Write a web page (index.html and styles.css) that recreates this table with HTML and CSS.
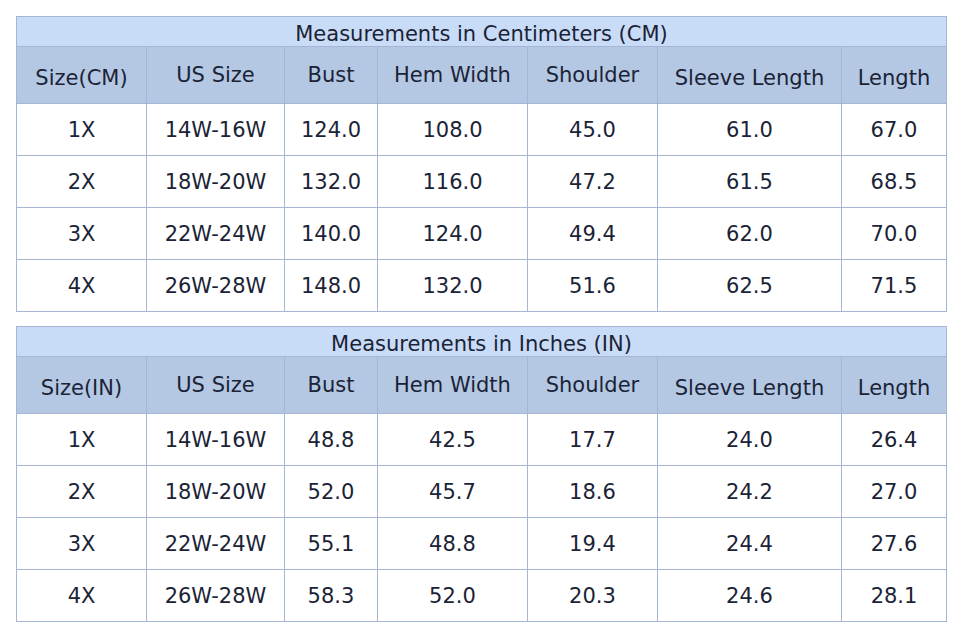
FILE: index.html
```html
<!DOCTYPE html>
<html lang="en">
<head>
  <meta charset="UTF-8" />
  <title>Size Chart</title>
  <link rel="stylesheet" href="styles.css">
</head>
<body>
  <table class="size-table">
    <colgroup>
      <col class="c1"><col class="c2"><col class="c3"><col class="c4"><col class="c5"><col class="c6"><col class="c7">
    </colgroup>
    <tr class="title-row"><td colspan="7">Measurements in Centimeters (CM)</td></tr>
    <tr class="head-row">
      <th class="low">Size(CM)</th>
      <th>US Size</th>
      <th>Bust</th>
      <th>Hem Width</th>
      <th>Shoulder</th>
      <th class="low">Sleeve Length</th>
      <th class="low">Length</th>
    </tr>
    <tr><td>1X</td><td>14W-16W</td><td>124.0</td><td>108.0</td><td>45.0</td><td>61.0</td><td>67.0</td></tr>
    <tr><td>2X</td><td>18W-20W</td><td>132.0</td><td>116.0</td><td>47.2</td><td>61.5</td><td>68.5</td></tr>
    <tr><td>3X</td><td>22W-24W</td><td>140.0</td><td>124.0</td><td>49.4</td><td>62.0</td><td>70.0</td></tr>
    <tr><td>4X</td><td>26W-28W</td><td>148.0</td><td>132.0</td><td>51.6</td><td>62.5</td><td>71.5</td></tr>
  </table>

  <table class="size-table">
    <colgroup>
      <col class="c1"><col class="c2"><col class="c3"><col class="c4"><col class="c5"><col class="c6"><col class="c7">
    </colgroup>
    <tr class="title-row"><td colspan="7">Measurements in Inches (IN)</td></tr>
    <tr class="head-row">
      <th class="low">Size(IN)</th>
      <th>US Size</th>
      <th>Bust</th>
      <th>Hem Width</th>
      <th>Shoulder</th>
      <th class="low">Sleeve Length</th>
      <th class="low">Length</th>
    </tr>
    <tr><td>1X</td><td>14W-16W</td><td>48.8</td><td>42.5</td><td>17.7</td><td>24.0</td><td>26.4</td></tr>
    <tr><td>2X</td><td>18W-20W</td><td>52.0</td><td>45.7</td><td>18.6</td><td>24.2</td><td>27.0</td></tr>
    <tr><td>3X</td><td>22W-24W</td><td>55.1</td><td>48.8</td><td>19.4</td><td>24.4</td><td>27.6</td></tr>
    <tr><td>4X</td><td>26W-28W</td><td>58.3</td><td>52.0</td><td>20.3</td><td>24.6</td><td>28.1</td></tr>
  </table>
</body>
</html>
```

FILE: styles.css
```css
* {
  margin: 0;
  padding: 0;
  box-sizing: border-box;
}
body {
  font-family: 'DejaVu Sans', Verdana, sans-serif;
  background: white;
  color: #1b2336;
  padding: 16px 0 0 16px;
}
.size-table {
  border-collapse: collapse;
  table-layout: fixed;
  width: 930px;
  margin-bottom: 14px;
  font-size: 21px;
}
.c1 { width: 130px; }
.c2 { width: 138px; }
.c3 { width: 93px; }
.c4 { width: 150px; }
.c5 { width: 130px; }
.c6 { width: 184px; }
.c7 { width: 105px; }
td, th {
  border: 1px solid #a4b6d3;
  text-align: center;
  vertical-align: middle;
  font-weight: normal;
  height: 52px;
}
.title-row td {
  background: #c9dcf7;
  height: 30px;
  padding-top: 5px;
}
.head-row th {
  background: #b4c8e4;
  height: 57px;
}
.head-row th.low {
  padding-top: 5px;
}
```
